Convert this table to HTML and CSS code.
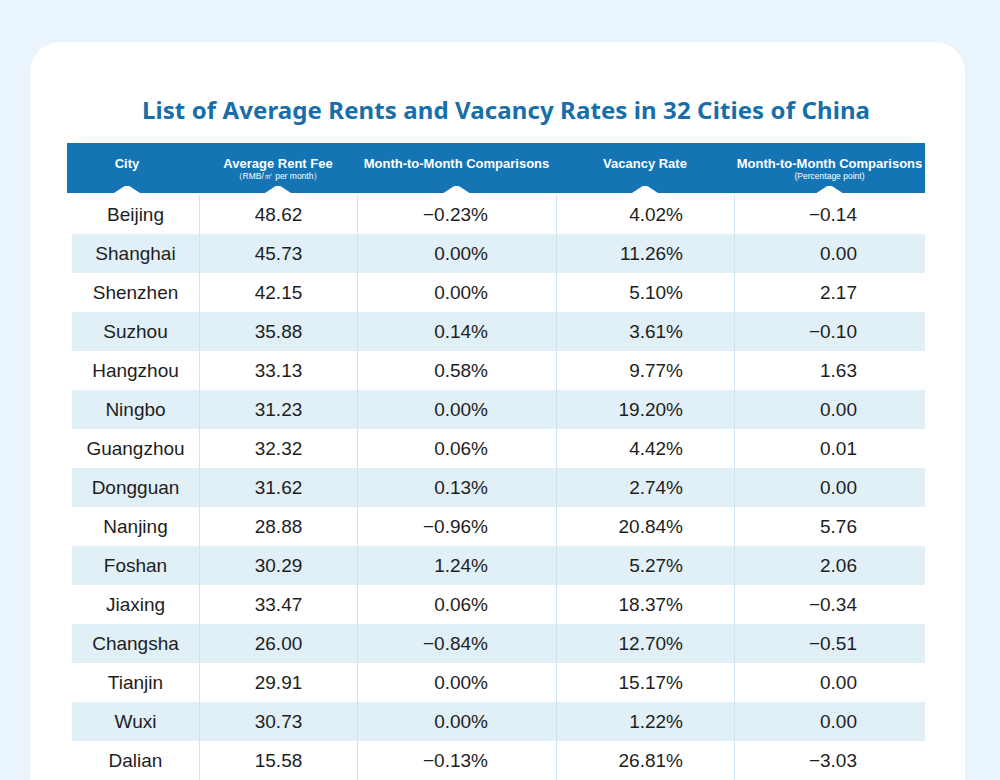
FILE: index.html
```html
<!DOCTYPE html>
<html lang="en">
<head>
<meta charset="utf-8">
<title>List of Average Rents and Vacancy Rates in 32 Cities of China</title>
<link rel="stylesheet" href="styles.css">
</head>
<body>
<div class="card">
  <h1 class="title">List of Average Rents and Vacancy Rates in 32 Cities of China</h1>
  <div class="table">
    <div class="head">
      <div class="hcell hcity"><span class="main">City</span></div>
      <div class="hcell"><span class="main">Average Rent Fee</span><span class="sub">（RMB/㎡ per month）</span></div>
      <div class="hcell"><span class="main">Month-to-Month Comparisons</span></div>
      <div class="hcell"><span class="main">Vacancy Rate</span></div>
      <div class="hcell"><span class="main">Month-to-Month Comparisons</span><span class="sub">(Percentage point)</span></div>
    </div>
    <div class="body">
    <div class="row"><div class="c c1">Beijing</div><div class="c c2">48.62</div><div class="c c3">−0.23%</div><div class="c c4">4.02%</div><div class="c c5">−0.14</div></div>
    <div class="row alt"><div class="c c1">Shanghai</div><div class="c c2">45.73</div><div class="c c3">0.00%</div><div class="c c4">11.26%</div><div class="c c5">0.00</div></div>
    <div class="row"><div class="c c1">Shenzhen</div><div class="c c2">42.15</div><div class="c c3">0.00%</div><div class="c c4">5.10%</div><div class="c c5">2.17</div></div>
    <div class="row alt"><div class="c c1">Suzhou</div><div class="c c2">35.88</div><div class="c c3">0.14%</div><div class="c c4">3.61%</div><div class="c c5">−0.10</div></div>
    <div class="row"><div class="c c1">Hangzhou</div><div class="c c2">33.13</div><div class="c c3">0.58%</div><div class="c c4">9.77%</div><div class="c c5">1.63</div></div>
    <div class="row alt"><div class="c c1">Ningbo</div><div class="c c2">31.23</div><div class="c c3">0.00%</div><div class="c c4">19.20%</div><div class="c c5">0.00</div></div>
    <div class="row"><div class="c c1">Guangzhou</div><div class="c c2">32.32</div><div class="c c3">0.06%</div><div class="c c4">4.42%</div><div class="c c5">0.01</div></div>
    <div class="row alt"><div class="c c1">Dongguan</div><div class="c c2">31.62</div><div class="c c3">0.13%</div><div class="c c4">2.74%</div><div class="c c5">0.00</div></div>
    <div class="row"><div class="c c1">Nanjing</div><div class="c c2">28.88</div><div class="c c3">−0.96%</div><div class="c c4">20.84%</div><div class="c c5">5.76</div></div>
    <div class="row alt"><div class="c c1">Foshan</div><div class="c c2">30.29</div><div class="c c3">1.24%</div><div class="c c4">5.27%</div><div class="c c5">2.06</div></div>
    <div class="row"><div class="c c1">Jiaxing</div><div class="c c2">33.47</div><div class="c c3">0.06%</div><div class="c c4">18.37%</div><div class="c c5">−0.34</div></div>
    <div class="row alt"><div class="c c1">Changsha</div><div class="c c2">26.00</div><div class="c c3">−0.84%</div><div class="c c4">12.70%</div><div class="c c5">−0.51</div></div>
    <div class="row"><div class="c c1">Tianjin</div><div class="c c2">29.91</div><div class="c c3">0.00%</div><div class="c c4">15.17%</div><div class="c c5">0.00</div></div>
    <div class="row alt"><div class="c c1">Wuxi</div><div class="c c2">30.73</div><div class="c c3">0.00%</div><div class="c c4">1.22%</div><div class="c c5">0.00</div></div>
    <div class="row"><div class="c c1">Dalian</div><div class="c c2">15.58</div><div class="c c3">−0.13%</div><div class="c c4">26.81%</div><div class="c c5">−3.03</div></div>
    </div>
  </div>
</div>
</body>
</html>
```
FILE: styles.css
```css
html, body {
  margin: 0;
  padding: 0;
}
body {
  background: #eaf4fc;
  height: 780px;
  overflow: hidden;
  font-family: "Liberation Sans", Arial, sans-serif;
}
.card {
  margin: 42px 0 0 30px;
  width: 935px;
  background: #ffffff;
  border-radius: 30px 30px 0 0;
  padding: 52px 0 0 37px;
  box-sizing: border-box;
}
.title {
  margin: 0 0 17px 0;
  width: 858px;
  box-sizing: border-box;
  padding-left: 20px;
  text-align: center;
  font-family: "Noto Sans", "Open Sans", sans-serif;
  font-weight: 700;
  font-size: 24px;
  line-height: 32px;
  color: #186ea9;
  letter-spacing: 0.1px;
}
.table {
  width: 858px;
}
.head {
  display: grid;
  grid-template-columns: 132px 158px 199px 178px 191px;
  height: 50px;
  background: #1474b4;
  color: #ffffff;
}
.hcell {
  position: relative;
  display: flex;
  flex-direction: column;
  align-items: center;
  padding-top: 13px;
  font-weight: 700;
}
.hcell::after {
  content: "";
  position: absolute;
  bottom: 0;
  left: 50%;
  width: 26px;
  height: 7px;
  margin-left: -13px;
  background: #ffffff;
  clip-path: polygon(0 100%, 38% 8%, 44% 0, 56% 0, 62% 8%, 100% 100%);
}
.hcity {
  padding-right: 12px;
}
.hcity::after {
  margin-left: -19px;
}
.main {
  font-size: 13px;
  line-height: 15px;
  white-space: nowrap;
}
.sub {
  font-size: 8.5px;
  line-height: 10px;
  font-weight: 400;
  white-space: nowrap;
}
.body {
  padding-top: 2px;
}
.row {
  display: grid;
  grid-template-columns: 127px 158px 199px 178px 191px;
  margin-left: 5px;
  height: 39px;
  font-size: 19px;
  line-height: 39px;
  color: #1e1e1e;
}
.row.alt {
  background: #e1eff7;
}
.c {
  white-space: nowrap;
}
.c1 {
  text-align: center;
}
.c2 {
  text-align: center;
  border-left: 1px solid #cfe4f0;
}
.c3 {
  text-align: right;
  padding-right: 68px;
  border-left: 1px solid #cfe4f0;
}
.c4 {
  text-align: right;
  padding-right: 51px;
  border-left: 1px solid #cfe4f0;
}
.c5 {
  text-align: right;
  padding-right: 68px;
  border-left: 1px solid #cfe4f0;
}
```
